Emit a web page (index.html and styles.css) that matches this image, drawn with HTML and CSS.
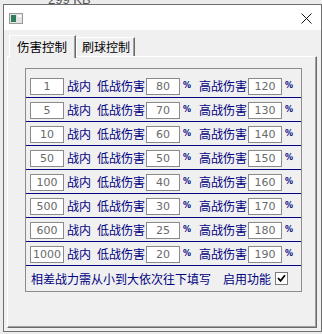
FILE: index.html
```html
<!DOCTYPE html>
<html lang="zh-CN">
<head>
  <meta charset="UTF-8">
  <title>伤害控制</title>
  <link rel="stylesheet" href="styles.css">
</head>
<body>
  <div class="strip"><span>299 KB</span></div>
  <div class="window">
    <div class="titlebar">
      <svg class="app-icon" width="14" height="11" viewBox="0 0 14 11">
        <rect x="0.5" y="0.5" width="13" height="10" fill="#e4e4e4" stroke="#9a9a9a"/>
        <rect x="2" y="2" width="5" height="7" fill="#2e7d5b"/>
        <rect x="9" y="2" width="3" height="2" fill="#ffffff"/>
      </svg>
      <svg class="close" width="11" height="11" viewBox="0 0 11 11">
        <path d="M0.5 0.5 L10.5 10.5 M10.5 0.5 L0.5 10.5" stroke="#111" stroke-width="1"/>
      </svg>
    </div>
    <div class="client">
      <div class="tabs">
        <div class="tab active">伤害控制</div>
        <div class="tab">刷球控制</div>
      </div>
      <div class="panel">
        <div class="group">
          <div class="row">
            <input class="num" value="1"><span class="lbl l1">战内</span><span class="lbl l2">低战伤害</span>
            <input class="num n2" value="80"><span class="pct">%</span><span class="lbl l3">高战伤害</span>
            <input class="num n2" value="120"><span class="pct">%</span>
          </div>
          <div class="row">
            <input class="num" value="5"><span class="lbl l1">战内</span><span class="lbl l2">低战伤害</span>
            <input class="num n2" value="70"><span class="pct">%</span><span class="lbl l3">高战伤害</span>
            <input class="num n2" value="130"><span class="pct">%</span>
          </div>
          <div class="row">
            <input class="num" value="10"><span class="lbl l1">战内</span><span class="lbl l2">低战伤害</span>
            <input class="num n2" value="60"><span class="pct">%</span><span class="lbl l3">高战伤害</span>
            <input class="num n2" value="140"><span class="pct">%</span>
          </div>
          <div class="row">
            <input class="num" value="50"><span class="lbl l1">战内</span><span class="lbl l2">低战伤害</span>
            <input class="num n2" value="50"><span class="pct">%</span><span class="lbl l3">高战伤害</span>
            <input class="num n2" value="150"><span class="pct">%</span>
          </div>
          <div class="row">
            <input class="num" value="100"><span class="lbl l1">战内</span><span class="lbl l2">低战伤害</span>
            <input class="num n2" value="40"><span class="pct">%</span><span class="lbl l3">高战伤害</span>
            <input class="num n2" value="160"><span class="pct">%</span>
          </div>
          <div class="row">
            <input class="num" value="500"><span class="lbl l1">战内</span><span class="lbl l2">低战伤害</span>
            <input class="num n2" value="30"><span class="pct">%</span><span class="lbl l3">高战伤害</span>
            <input class="num n2" value="170"><span class="pct">%</span>
          </div>
          <div class="row">
            <input class="num" value="600"><span class="lbl l1">战内</span><span class="lbl l2">低战伤害</span>
            <input class="num n2" value="25"><span class="pct">%</span><span class="lbl l3">高战伤害</span>
            <input class="num n2" value="180"><span class="pct">%</span>
          </div>
          <div class="row">
            <input class="num" value="1000"><span class="lbl l1">战内</span><span class="lbl l2">低战伤害</span>
            <input class="num n2" value="20"><span class="pct">%</span><span class="lbl l3">高战伤害</span>
            <input class="num n2" value="190"><span class="pct">%</span>
          </div>
          <div class="footer">
            <span class="lbl">相差战力需从小到大依次往下填写</span>
            <span class="lbl enable">启用功能</span>
            <span class="check">
              <svg width="9" height="9" viewBox="0 0 9 9">
                <path d="M1 4 L3.5 6.8 L8 1.2" fill="none" stroke="#000" stroke-width="1.8"/>
              </svg>
            </span>
          </div>
        </div>
      </div>
    </div>
  </div>
</body>
</html>
```

FILE: styles.css
```css
html,
body {
  margin: 0;
  padding: 0;
}

body {
  width: 322px;
  height: 334px;
  overflow: hidden;
  background: #ececec;
  font-family: "Noto Sans CJK SC", sans-serif;
}

.strip {
  height: 4px;
  overflow: hidden;
  padding-left: 48px;
}

.strip span {
  display: block;
  margin-top: -7px;
  font-family: "Liberation Sans", sans-serif;
  font-size: 13px;
  line-height: 13px;
  color: #555;
}

.window {
  margin-left: 3px;
  width: 319px;
  height: 328px;
  box-sizing: border-box;
  border: 1px solid #6e6e6e;
  background: #f0f0f0;
}

.titlebar {
  height: 25px;
  background: #fff;
  display: flex;
  align-items: center;
  justify-content: space-between;
  padding: 0 9px 0 5px;
}

.app-icon {
  display: block;
  margin-top: 1px;
}

.close {
  display: block;
  margin-top: 1px;
}

.client {
  padding: 3px 4px 0 3px;
}

.tabs {
  display: flex;
  align-items: flex-end;
  height: 25px;
  margin-bottom: -2px;
  padding-left: 2px;
  position: relative;
  z-index: 1;
}

.tab {
  font-size: 12px;
  line-height: 17px;
  height: 18px;
  padding: 0 4px 0 5px;
  border-top: 1px solid #ffffff;
  border-left: 1px solid #ffffff;
  border-right: 1px solid #6a6a6a;
  box-shadow: inset -1px 0 0 #a0a0a0;
  color: #000;
  margin-bottom: 2px;
}

.tab.active {
  height: 22px;
  line-height: 21px;
  padding: 0 8px 0 7px;
  background: #f0f0f0;
  margin-bottom: 0;
  font-size: 12.5px;
}

.panel {
  width: 310px;
  height: 272px;
  box-sizing: border-box;
  border-top: 1px solid #ffffff;
  border-left: 1px solid #ffffff;
  border-right: 1px solid #6a6a6a;
  border-bottom: 1px solid #6a6a6a;
  box-shadow: inset -1px -1px 0 #a0a0a0;
  padding: 11px 0 0 17px;
}

.group {
  width: 277px;
  height: 224px;
  box-sizing: border-box;
  border: 1px solid #8c8c8c;
  padding-top: 5px;
}

.row {
  height: 23px;
  border-bottom: 1px solid #000080;
  display: flex;
  align-items: center;
  padding-left: 4px;
}

.num {
  width: 34px;
  height: 17px;
  box-sizing: border-box;
  border: 1px solid #8a8a8a;
  background: #fff;
  margin: 1px 0 0 0;
  padding: 0;
  text-align: center;
  font-family: "DejaVu Sans", sans-serif;
  font-size: 11px;
  color: #6a6a6a;
  outline: none;
}

.lbl {
  font-size: 12px;
  line-height: 16px;
  color: #000080;
  white-space: nowrap;
}

.l1 {
  margin-left: 3px;
}

.l2 {
  margin-left: 6px;
}

.l3 {
  margin-left: 11px;
}

.n2 {
  margin-left: 1px;
}

.pct {
  margin-left: 3px;
  font-family: "DejaVu Sans", sans-serif;
  font-size: 8px;
  font-weight: bold;
  color: #000080;
  width: 5px;
}

.footer {
  height: 25px;
  display: flex;
  align-items: center;
  padding-left: 5px;
}

.enable {
  margin-left: 12px;
}

.check {
  margin-left: 4px;
  width: 11px;
  height: 11px;
  border: 1px solid #7a7a7a;
  background: #fff;
  display: flex;
  align-items: center;
  justify-content: center;
}
```
